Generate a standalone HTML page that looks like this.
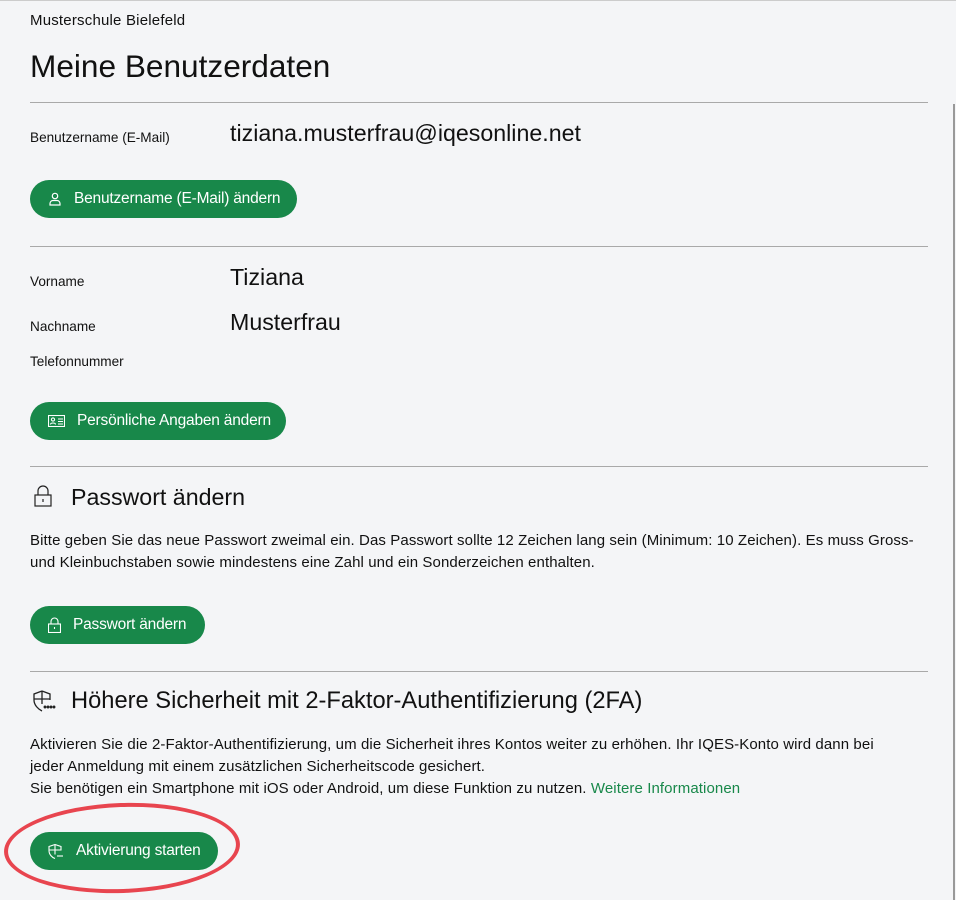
<!DOCTYPE html>
<html><head><meta charset="utf-8"><style>
body{margin:0;width:956px;height:900px;background:#f4f5f7;font-family:"Liberation Sans",sans-serif;color:#111;position:relative;overflow:hidden}
.a{position:absolute;white-space:nowrap}
.hr{position:absolute;left:30px;width:898px;height:1px;background:#a9a9a9}
.btn{position:absolute;left:30px;height:38px;border-radius:19px;background:#18884a;color:#fff;font-size:15.5px;letter-spacing:-0.2px;display:flex;align-items:center;box-sizing:border-box;padding-left:18px}
.btn svg{margin-right:12px}
.lab{font-size:13.6px}
.val{font-size:23.2px}
p{margin:0}
.txt{font-size:15px;line-height:22px;letter-spacing:0.1px}
</style></head><body>
<div style="position:absolute;left:0;top:0;width:956px;height:1px;background:#ccc"></div>
<div style="position:absolute;right:1px;top:104px;width:2px;height:796px;background:#999"></div>
<div class="a" style="left:30px;top:12px;font-size:15px;letter-spacing:0.2px">Musterschule Bielefeld</div>
<div class="a" style="left:30px;top:48px;font-size:31.6px">Meine Benutzerdaten</div>
<div class="hr" style="top:102px"></div>
<div class="a lab" style="left:30px;top:130px">Benutzername (E-Mail)</div>
<div class="a val" style="left:230px;top:120px">tiziana.musterfrau@iqesonline.net</div>
<div class="btn" style="top:180px;width:267px"><svg width="14" height="14" viewBox="0 0 14 14" fill="none" stroke="#fff" stroke-width="1.2"><circle cx="7" cy="4" r="2.7"/><path d="M2 13v-1.5a3 3 0 0 1 3-3h4a3 3 0 0 1 3 3V13z"/></svg>Benutzername (E-Mail) ändern</div>
<div class="hr" style="top:246px"></div>
<div class="a lab" style="left:30px;top:274px">Vorname</div>
<div class="a val" style="left:230px;top:264px">Tiziana</div>
<div class="a lab" style="left:30px;top:319px">Nachname</div>
<div class="a val" style="left:230px;top:309px">Musterfrau</div>
<div class="a lab" style="left:30px;top:354px">Telefonnummer</div>
<div class="btn" style="top:402px;width:256px"><svg width="17" height="12" viewBox="0 0 17 12" fill="none" stroke="#fff" stroke-width="1.1"><rect x=".5" y=".5" width="16" height="11"/><circle cx="5" cy="4.5" r="1.6"/><path d="M2.5 9.5c0-2 5-2 5 0M10 4h5M10 6.5h5M10 9h5"/></svg>Persönliche Angaben ändern</div>
<div class="hr" style="top:466px"></div>
<svg class="a" style="left:34px;top:485px" width="18" height="22" viewBox="0 0 18 22" fill="none" stroke="#222" stroke-width="1.2"><path d="M4 10V6a5 5 0 0 1 10 0v4"/><rect x="1" y="10" width="16" height="11"/><path d="M9 14v3"/></svg>
<div class="a" style="left:71px;top:484px;font-size:23.2px">Passwort ändern</div>
<div class="a txt" style="left:30px;top:530px">Bitte geben Sie das neue Passwort zweimal ein. Das Passwort sollte 12 Zeichen lang sein (Minimum: 10 Zeichen). Es muss Gross-<br>und Kleinbuchstaben sowie mindestens eine Zahl und ein Sonderzeichen enthalten.</div>
<div class="btn" style="top:606px;width:175px"><svg width="13" height="16" viewBox="0 0 13 16" fill="none" stroke="#fff" stroke-width="1.1"><path d="M3 7V4.5a3.5 3.5 0 0 1 7 0V7"/><rect x=".5" y="7" width="12" height="8.5"/><path d="M6.5 10v2"/></svg>Passwort ändern</div>
<div class="hr" style="top:671px"></div>
<svg class="a" style="left:32px;top:690px" width="24" height="22" viewBox="0 0 24 22" fill="none" stroke="#222" stroke-width="1.3"><path d="M10 1l8 3v6M10 1L2 4v6c0 5 4 9 8 11"/><path d="M10 1v13M2 9h16"/><circle cx="13" cy="17" r=".8" fill="#222"/><circle cx="16" cy="17" r=".8" fill="#222"/><circle cx="19" cy="17" r=".8" fill="#222"/><circle cx="22" cy="17" r=".8" fill="#222"/></svg>
<div class="a" style="left:71px;top:688px;font-size:23.7px">Höhere Sicherheit mit 2-Faktor-Authentifizierung (2FA)</div>
<div class="a txt" style="left:30px;top:734px">Aktivieren Sie die 2-Faktor-Authentifizierung, um die Sicherheit ihres Kontos weiter zu erhöhen. Ihr IQES-Konto wird dann bei<br>jeder Anmeldung mit einem zusätzlichen Sicherheitscode gesichert.<br>Sie benötigen ein Smartphone mit iOS oder Android, um diese Funktion zu nutzen. <span style="color:#18884a">Weitere Informationen</span></div>
<div class="btn" style="top:832px;width:188px"><svg width="16" height="15" viewBox="0 0 16 15" fill="none" stroke="#fff" stroke-width="1.1"><path d="M7 .5l6 2v4M7 .5L1 2.5v4c0 4 3 7 6 8M7 .5v10M1 6h12"/><path d="M9 12h6"/></svg>Aktivierung starten</div>
<div style="position:absolute;left:4px;top:803px;width:236px;height:90px;border:4px solid #e8454f;border-radius:50%;box-sizing:border-box;transform:rotate(-2deg)"></div>
</body></html>
